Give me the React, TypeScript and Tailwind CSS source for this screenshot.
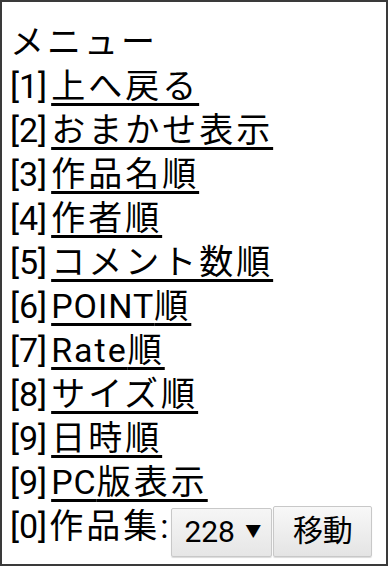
import React from "react";

const items: [string, React.ReactNode][] = [
  ["[1]", "上へ戻る"],
  ["[2]", "おまかせ表示"],
  ["[3]", "作品名順"],
  ["[4]", "作者順"],
  ["[5]", "コメント数順"],
  ["[6]", <><span className="tracking-[1px]">POINT</span>順</>],
  ["[7]", <><span className="tracking-[2px]">Rate</span>順</>],
  ["[8]", "サイズ順"],
  ["[9]", "日時順"],
  ["[9]", <><span className="tracking-[1px]">PC</span>版表示</>],
];

export default function App() {
  return (
    <div
      className="box-border h-[566px] w-[388px] overflow-hidden border-2 border-[#3a3a3a] bg-white pl-2 pt-[18px] text-[34px] leading-[44px] text-black"
      style={{ fontFamily: 'Roboto, "Noto Sans CJK JP", sans-serif' }}
    >
      <div className="h-[44px] tracking-[3px]">メニュー</div>
      {items.map(([k, t], i) => (
        <div key={i} className="flex h-[44px] items-center whitespace-nowrap">
          <span>{k}</span>
          <a
            href="#"
            className="ml-[4px] tracking-[3px] text-black underline decoration-[3px] underline-offset-[5px]"
          >
            {t}
          </a>
        </div>
      ))}
      <div className="flex h-[44px] items-center whitespace-nowrap">
        <span>[0]</span>
        <span className="ml-[2px] tracking-[3px]">作品集:</span>
        <div className="mt-[12px] flex h-[49px] w-[101px] items-center justify-between rounded-[2px] border border-[#c8c8c8] bg-gradient-to-b from-[#f6f6f6] to-[#e6e6e6] pl-[12px] pr-[10px] text-[30px] leading-none shadow-[0_1px_1px_rgba(0,0,0,0.15)]">
          <span>228</span>
          <span className="text-[16px]">▼</span>
        </div>
        <button className="ml-[1px] mt-[10px] flex h-[51px] w-[99px] items-center justify-center rounded-[2px] border border-[#c8c8c8] bg-gradient-to-b from-[#f8f8f8] to-[#e4e4e4] text-[30px] leading-none text-black shadow-[0_1px_1px_rgba(0,0,0,0.15)]">
          移動
        </button>
      </div>
    </div>
  );
}
